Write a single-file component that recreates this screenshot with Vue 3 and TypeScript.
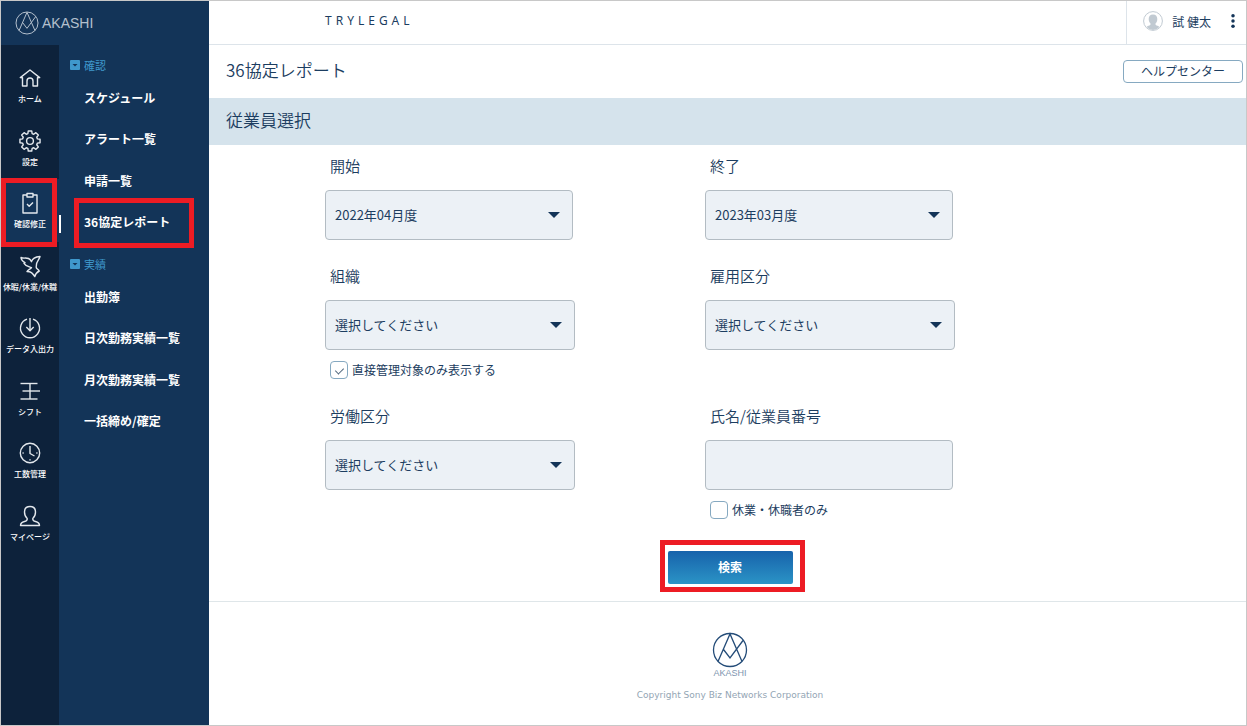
<script setup lang="ts">
import { ref } from 'vue'

interface RailItem {
  label: string
  paths: string[]
  active?: boolean
}
interface MenuItem {
  label: string
  current?: boolean
}
interface MenuGroup {
  title: string
  items: MenuItem[]
}

function gearPath(teeth: number): string {
  const corners: [number, number][] = [
    [-0.28, 7.7],
    [-0.17, 10.2],
    [0.17, 10.2],
    [0.28, 7.7],
  ]
  const points: string[] = []
  for (let i = 0; i < teeth; i++) {
    const base = (i * 2 * Math.PI) / teeth - Math.PI / 2
    for (const [offset, radius] of corners) {
      const x = (12 + radius * Math.cos(base + offset)).toFixed(2)
      const y = (12 + radius * Math.sin(base + offset)).toFixed(2)
      points.push(`${x} ${y}`)
    }
  }
  return `M${points.join('L')}z`
}

const rail: RailItem[] = [
  { label: 'ホーム', paths: ['M4.500 20v-8.200L2.300 11.600 12 4l9.700 7.600-2.200.2V20H15v-5a3 3 0 0 0-6 0v5z'] },
  { label: '設定', paths: [gearPath(8), 'M12 8.600a3.400 3.400 0 1 0 0 6.800 3.400 3.400 0 0 0 0-6.800z'] },
  { label: '確認修正', active: true, paths: ['M9 4H5v18h14V4h-4', 'M9 2.500h6v3.500H9z', 'M9 13l2.200 2.200L15 11.500'] },
  {
    label: '休暇/休業/休職',
    paths: [
      'M3 3.500c2.500 1.200 5 0 7.500 1 1.500.7 2.300 1.800 3 3.200C14.300 4.500 17.500 2.800 22 2.500c-.8 3.500-3.800 5-3.600 8.500.1 1.500-.6 2 0 3 .6.900 1.900 1.300 2.900 3-2 1-3.800 2.800-4.500 5.500-1.300-2-3-4.500-5.300-4.800L9 17.500c1-2 3.300-2 4.500-3.800C11 12.500 7.500 12 6 9.300l1-.6C5 7.500 3 6 3 3.500z',
    ],
  },
  { label: 'データ入出力', paths: ['M9 3.200a9.500 9.500 0 1 0 6 0', 'M12 2v12.500', 'M8.300 11l3.700 3.700 3.700-3.700'] },
  { label: 'シフト', paths: ['M2.500 4.500h17', 'M4.500 12h17.500', 'M2.500 20h17', 'M12 4.500V20'] },
  {
    label: '工数管理',
    paths: [
      'M12 2.300a9.700 9.700 0 1 0 0 19.400 9.700 9.700 0 0 0 0-19.400z',
      'M12 5v7.500l4.500 2.500',
      'M4.500 12h1.200',
      'M18.300 12h1.200',
      'M12 18.300v1.200',
    ],
  },
  {
    label: 'マイページ',
    paths: [
      'M12 2.500c-3.500 0-5.500 2.300-5.500 5.500 0 3 1 5 2.700 6.500.3 2-.7 2.500-2.700 3-2.500.6-4 1.500-4 4h19c0-2.500-1.500-3.400-4-4-2-.5-3-1-2.700-3C16.500 13 17.500 11 17.500 8c0-3.200-2-5.500-5.500-5.500z',
    ],
  },
]

const groups: MenuGroup[] = [
  {
    title: '確認',
    items: [{ label: 'スケジュール' }, { label: 'アラート一覧' }, { label: '申請一覧' }, { label: '36協定レポート', current: true }],
  },
  {
    title: '実績',
    items: [{ label: '出勤簿' }, { label: '日次勤務実績一覧' }, { label: '月次勤務実績一覧' }, { label: '一括締め/確定' }],
  },
]

const startMonth = ref('2022年04月度')
const endMonth = ref('2023年03月度')
const organization = ref('')
const employment = ref('')
const labor = ref('')
const keyword = ref('')
const directOnly = ref(true)
const leaveOnly = ref(false)
</script>

<template>
  <div class="page">
    <aside class="sidebar">
      <a class="brand" href="#">
        <svg class="brand-mark" viewBox="0 0 36 36" aria-hidden="true">
          <circle cx="18" cy="18" r="16.5" />
          <path d="M6 29.500 18 2l12 27.500M11.500 17.500 18 26 31 8.500" />
        </svg>
        <span>AKASHI</span>
      </a>
      <div class="menus">
        <nav class="rail" aria-label="メイン">
          <div class="rail-items">
            <a v-for="item in rail" :key="item.label" href="#" class="rail-item" :class="{ active: item.active }">
              <svg viewBox="0 0 24 24" aria-hidden="true">
                <path v-for="d in item.paths" :key="d" :d="d" />
              </svg>
              <span>{{ item.label }}</span>
              <i v-if="item.active" class="callout"></i>
            </a>
          </div>
        </nav>
        <nav class="panel" aria-label="確認修正">
          <section v-for="group in groups" :key="group.title" class="group">
            <button type="button" class="group-title">
              <svg viewBox="0 0 10 10" aria-hidden="true">
                <rect width="10" height="10" rx="1" />
                <path d="M2.500 4h5L5 6.500z" />
              </svg>
              {{ group.title }}
            </button>
            <ul>
              <li v-for="item in group.items" :key="item.label">
                <a href="#">{{ item.label }}<i v-if="item.current" class="callout"></i></a>
              </li>
            </ul>
          </section>
        </nav>
      </div>
    </aside>

    <main class="main">
      <header class="topbar">
        <span class="company">TRYLEGAL</span>
        <div class="user">
          <svg class="avatar" viewBox="0 0 20 20" aria-hidden="true">
            <circle class="ring" cx="10" cy="10" r="9.400" />
            <path d="M10 3.500c-3 0-4.300 2-4.300 4.500 0 2 .8 3.500 1.800 4.500.3 1.500-.6 1.800-2 2.300-.9.300-1.500.7-1.800 1.200A8.700 8.700 0 0 0 10 19a8.700 8.700 0 0 0 6.300-3c-.3-.5-.9-.9-1.800-1.200-1.400-.5-2.300-.8-2-2.300 1-1 1.800-2.500 1.800-4.500 0-2.500-1.300-4.500-4.300-4.500z" />
          </svg>
          <span>試 健太</span>
          <button type="button" class="more" aria-label="メニュー">
            <svg viewBox="0 0 4 16" aria-hidden="true">
              <circle cx="2" cy="2" r="2" />
              <circle cx="2" cy="8" r="2" />
              <circle cx="2" cy="14" r="2" />
            </svg>
          </button>
        </div>
      </header>

      <div class="title-row">
        <h1>36協定レポート</h1>
        <button type="button" class="help">ヘルプセンター</button>
      </div>
      <h2>従業員選択</h2>

      <form class="search" @submit.prevent>
        <div class="fields">
          <div class="field">
            <label for="start">開始</label>
            <div class="control month">
              <select id="start" v-model="startMonth">
                <option>2022年04月度</option>
              </select>
              <svg viewBox="0 0 12 6" aria-hidden="true"><path d="M0 0h12L6 6z" /></svg>
            </div>
          </div>
          <div class="field">
            <label for="end">終了</label>
            <div class="control month">
              <select id="end" v-model="endMonth">
                <option>2023年03月度</option>
              </select>
              <svg viewBox="0 0 12 6" aria-hidden="true"><path d="M0 0h12L6 6z" /></svg>
            </div>
          </div>
          <div class="field">
            <label for="organization">組織</label>
            <div class="control">
              <select id="organization" v-model="organization">
                <option value="">選択してください</option>
              </select>
              <svg viewBox="0 0 12 6" aria-hidden="true"><path d="M0 0h12L6 6z" /></svg>
            </div>
            <label class="check"><input v-model="directOnly" type="checkbox" /><span>直接管理対象のみ表示する</span></label>
          </div>
          <div class="field">
            <label for="employment">雇用区分</label>
            <div class="control">
              <select id="employment" v-model="employment">
                <option value="">選択してください</option>
              </select>
              <svg viewBox="0 0 12 6" aria-hidden="true"><path d="M0 0h12L6 6z" /></svg>
            </div>
          </div>
          <div class="field">
            <label for="labor">労働区分</label>
            <div class="control">
              <select id="labor" v-model="labor">
                <option value="">選択してください</option>
              </select>
              <svg viewBox="0 0 12 6" aria-hidden="true"><path d="M0 0h12L6 6z" /></svg>
            </div>
          </div>
          <div class="field">
            <label for="keyword">氏名/従業員番号</label>
            <div class="control month">
              <input id="keyword" v-model="keyword" type="text" />
            </div>
            <label class="check"><input v-model="leaveOnly" type="checkbox" /><span>休業・休職者のみ</span></label>
          </div>
        </div>
        <div class="actions">
          <button type="submit" class="submit">検索<i class="callout"></i></button>
        </div>
      </form>

      <footer class="footer">
        <svg class="footer-mark" viewBox="0 0 36 36" aria-hidden="true">
          <circle cx="18" cy="18" r="16.5" />
          <path d="M6 29.500 18 2l12 27.500M11.500 17.500 18 26 31 8.500" />
        </svg>
        <span class="footer-name">AKASHI</span>
        <small>Copyright Sony Biz Networks Corporation</small>
      </footer>
    </main>
  </div>
</template>

<style>
body {
  margin: 0;
}
</style>

<style scoped>
.page,
.page * {
  box-sizing: border-box;
}
.page {
  display: flex;
  min-height: 100vh;
  border: 1px solid #c8c8c8;
  background: #fff;
  color: #1c3d60;
  font-family: "Noto Sans CJK JP", sans-serif;
  font-size: 12px;
}
a {
  color: inherit;
  text-decoration: none;
}
button,
input,
select {
  font: inherit;
  color: inherit;
}
svg {
  display: block;
  flex: none;
}
.callout {
  position: absolute;
  border: 5px solid #ed1c24;
  pointer-events: none;
}

.sidebar {
  display: flex;
  flex: none;
  flex-direction: column;
  width: 208px;
  background: #133458;
}
.brand {
  display: flex;
  align-items: center;
  gap: 3px;
  height: 44px;
  padding-left: 14px;
  color: #b4c0cd;
  font-family: "Liberation Sans", sans-serif;
  font-size: 14px;
}
.brand-mark {
  width: 24px;
  height: 24px;
  fill: none;
  stroke: currentColor;
  stroke-width: 1.5;
}
.menus {
  display: flex;
  flex: 1;
}
.rail {
  flex: none;
  width: 58px;
  padding-top: 9px;
  background: #0d223b;
}
.rail-items {
  display: grid;
  grid-template-rows: repeat(8, 1fr);
  height: 500px;
}
.rail-item {
  position: relative;
  display: flex;
  flex-direction: column;
  align-items: center;
  gap: 3px;
  padding-top: 12px;
  color: #fff;
  font-size: 8px;
  font-weight: 500;
  line-height: 12px;
  white-space: nowrap;
}
.rail-item svg {
  width: 24px;
  height: 24px;
  fill: none;
  stroke: #e3e8ed;
  stroke-linejoin: round;
  stroke-width: 1.4;
}
.rail-item.active {
  background: #133458;
}
.rail-item.active::after {
  position: absolute;
  top: 36px;
  right: -2px;
  width: 2px;
  height: 18px;
  background: #fff;
  content: "";
}
.rail-item .callout {
  top: -1px;
  left: 0;
  width: 56px;
  height: 69px;
}
.panel {
  flex: 1;
  padding-top: 8px;
}
.group {
  margin-bottom: 9px;
}
.group-title {
  display: flex;
  align-items: center;
  gap: 4px;
  height: 24px;
  padding: 0 0 0 11px;
  border: 0;
  background: none;
  color: #3f98cc;
  font-size: 11px;
}
.group-title svg {
  width: 10px;
  height: 10px;
  fill: #3f98cc;
}
.group-title path {
  fill: #133458;
}
.group ul {
  display: grid;
  grid-auto-rows: 1fr;
  height: 166px;
  margin: 0;
  padding: 0 0 0 25px;
  list-style: none;
}
.group li {
  display: flex;
  align-items: center;
}
.group a {
  position: relative;
  color: #fff;
  font-weight: 700;
  line-height: 20px;
}
.group .callout {
  top: -14px;
  left: -10px;
  width: 120px;
  height: 50px;
}

.main {
  flex: 1;
  min-width: 0;
}
.topbar {
  display: flex;
  justify-content: space-between;
  height: 44px;
  padding-left: 116px;
  border-bottom: 1px solid #dde4ea;
}
.company {
  font-family: "Noto Sans", sans-serif;
  line-height: 39px;
  letter-spacing: 4px;
}
.user {
  display: flex;
  align-items: center;
  padding: 0 11px 3px 16px;
  border-left: 1px solid #dde4ea;
}
.avatar {
  width: 20px;
  height: 20px;
  margin-right: 9px;
  fill: #c1cad2;
}
.avatar .ring {
  fill: #fff;
  stroke: #c1cad2;
}
.more {
  margin-left: 20px;
  padding: 0;
  border: 0;
  background: none;
}
.more svg {
  width: 4px;
  height: 14px;
  fill: #133458;
}
.title-row {
  display: flex;
  align-items: center;
  justify-content: space-between;
  height: 53px;
  padding: 0 3px 0 17px;
}
h1,
h2 {
  margin: 0;
  font-size: 17px;
  font-weight: 350;
}
h1 {
  padding-bottom: 4px;
}
.help {
  width: 120px;
  height: 23px;
  padding: 0 0 2px;
  border: 1px solid #86a9c1;
  border-radius: 4px;
  background: #fff;
  line-height: 18px;
}
h2 {
  height: 47px;
  padding-left: 17px;
  background: #d5e3ec;
  line-height: 44px;
}
.search {
  padding: 10px 0 17px 116px;
}
.fields {
  display: grid;
  grid-template-columns: repeat(2, minmax(0, 250px));
  gap: 25px 130px;
}
.field > label {
  display: block;
  padding-left: 5px;
  font-size: 15px;
  font-weight: 350;
  line-height: 22px;
}
.control {
  position: relative;
  height: 50px;
  margin-top: 13px;
}
.control.month {
  width: 248px;
  max-width: 100%;
}
.control select,
.control input {
  display: block;
  width: 100%;
  height: 100%;
  padding: 0 30px 2px 9px;
  border: 1px solid #b3bcc3;
  border-radius: 4px;
  background: #ecf1f6;
  appearance: none;
  font-size: 13px;
}
.control svg {
  position: absolute;
  top: 22px;
  right: 13px;
  width: 12px;
  height: 6px;
  fill: #133458;
  pointer-events: none;
}
.field > .check {
  display: flex;
  align-items: center;
  gap: 4px;
  height: 20px;
  margin-top: 10px;
  font-size: 12px;
  font-weight: 400;
  line-height: 18px;
}
.check input {
  position: relative;
  width: 18px;
  height: 18px;
  margin: 0;
  border: 1px solid #86a9c1;
  border-radius: 4px;
  background: #fff;
  appearance: none;
}
.check input:checked::after {
  position: absolute;
  top: 4px;
  left: 6px;
  width: 4px;
  height: 7px;
  border: solid #50677d;
  border-width: 0 1px 1px 0;
  transform: rotate(45deg);
  content: "";
}
.actions {
  display: flex;
  justify-content: center;
  margin-top: 31px;
  margin-left: -116px;
  padding-left: 5px;
}
.submit {
  position: relative;
  width: 125px;
  height: 33px;
  padding: 0 0 2px;
  border: 0;
  border-radius: 2px;
  background: linear-gradient(#1762ab, #2b94c6);
  color: #fff;
  font-weight: 700;
}
.submit .callout {
  top: -11px;
  left: -8px;
  width: 145px;
  height: 52px;
}
.footer {
  display: flex;
  flex-direction: column;
  align-items: center;
  padding: 30px 0 20px 5px;
  border-top: 1px solid #dfe6e9;
}
.footer-mark {
  width: 36px;
  height: 36px;
  fill: none;
  stroke: #244c78;
  stroke-width: 1.3;
}
.footer-name {
  color: #7d95af;
  font-family: "Liberation Sans", sans-serif;
  font-size: 9px;
  line-height: 10px;
}
.footer small {
  margin-top: 10px;
  color: #93a5b4;
  font-family: "DejaVu Sans", sans-serif;
  font-size: 9px;
  line-height: 14px;
}
</style>
